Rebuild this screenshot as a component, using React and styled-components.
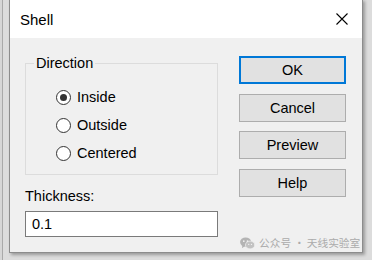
import React from "react";
import styled, { createGlobalStyle } from "styled-components";

const Global = createGlobalStyle`
  html, body { margin: 0; padding: 0; }
  body {
    width: 372px; height: 260px; overflow: hidden;
    background: #e4e4e4;
    font-family: "Liberation Sans", Arial, sans-serif;
  }
`;

const Desktop = styled.div`
  position: relative;
  width: 372px;
  height: 260px;
  display: flex;
  align-items: flex-start;
  background: linear-gradient(to right, #d6d6d6 0, #d6d6d6 2px, #a9a9a9 2px, #a9a9a9 3px, #dcdcdc 3px);
  overflow: hidden;
`;

const Window = styled.div`
  margin: -1px 0 0 9px;
  width: 354px;
  height: 254px;
  box-sizing: border-box;
  border: 1px solid #8c8c8c;
  background: #f0f0f0;
  box-shadow: 2px 2px 3px rgba(0, 0, 0, 0.3);
  display: flex;
  flex-direction: column;
`;

const TitleBar = styled.div`
  height: 38px;
  flex: none;
  background: #ffffff;
  display: flex;
  align-items: center;
  justify-content: space-between;
  padding: 0 14px 0 10px;
`;

const Title = styled.span`
  font-size: 15px;
  color: #000;
  margin-top: 1px;
`;

const CloseIcon = styled.svg`
  width: 12px;
  height: 12px;
  display: block;
`;

const Body = styled.div`
  flex: 1;
  display: flex;
  justify-content: space-between;
  padding: 18px 16px 0 15px;
`;

const LeftCol = styled.div`
  width: 193px;
  display: flex;
  flex-direction: column;
`;

const Group = styled.div`
  position: relative;
  margin-top: 7px;
  height: 112px;
  box-sizing: border-box;
  border: 1px solid #dcdcdc;
  padding: 19px 0 0 30px;
  display: flex;
  flex-direction: column;
`;

const Legend = styled.span`
  position: absolute;
  top: -9px;
  left: 8px;
  padding: 0 2px;
  background: #f0f0f0;
  font-size: 14.5px;
  line-height: 17px;
  color: #000;
`;

const RadioRow = styled.label`
  height: 28px;
  display: flex;
  align-items: center;
  gap: 6px;
  font-size: 14.5px;
  color: #000;
`;

const RadioCircle = styled.span`
  width: 15px;
  height: 15px;
  box-sizing: border-box;
  border-radius: 50%;
  border: 1px solid #333333;
  background: #ffffff;
  display: flex;
  align-items: center;
  justify-content: center;
  &::after {
    content: "";
    width: 7px;
    height: 7px;
    border-radius: 50%;
    background: ${(p) => (p.$checked ? "#333333" : "transparent")};
  }
`;

const FieldLabel = styled.div`
  margin-top: 13px;
  font-size: 14.5px;
  line-height: 17px;
  color: #000;
`;

const Input = styled.div`
  margin-top: 6px;
  height: 26px;
  box-sizing: border-box;
  border: 1px solid #7a7a7a;
  background: #ffffff;
  display: flex;
  align-items: center;
  padding-left: 6px;
  font-size: 14.5px;
  color: #000;
`;

const ButtonCol = styled.div`
  width: 107px;
  display: flex;
  flex-direction: column;
  gap: 9.5px;
`;

const Button = styled.div`
  height: 28px;
  box-sizing: border-box;
  border: ${(p) => (p.$default ? "2px solid #0078d7" : "1px solid #adadad")};
  background: #e1e1e1;
  display: flex;
  align-items: center;
  justify-content: center;
  font-size: 14.5px;
  color: #000;
`;

const Watermark = styled.div`
  position: absolute;
  left: 240px;
  top: 236px;
  display: flex;
  align-items: center;
  font-family: "Noto Sans CJK SC", sans-serif;
  font-size: 10.7px;
  line-height: 14px;
  color: #ababab;
  white-space: nowrap;
`;

const WmText = styled.span`
  margin-left: ${(p) => p.$gap}px;
`;

const radios = [
  { label: "Inside", checked: true },
  { label: "Outside", checked: false },
  { label: "Centered", checked: false },
];

const buttons = [
  { label: "OK", def: true },
  { label: "Cancel" },
  { label: "Preview" },
  { label: "Help" },
];

export default function App() {
  return (
    <>
      <Global />
      <Desktop>
        <Window>
          <TitleBar>
            <Title>Shell</Title>
            <CloseIcon viewBox="0 0 12 12">
              <path d="M0.5 0.5 L11.5 11.5 M11.5 0.5 L0.5 11.5" stroke="#000" strokeWidth="1.1" fill="none" />
            </CloseIcon>
          </TitleBar>
          <Body>
            <LeftCol>
              <Group>
                <Legend>Direction</Legend>
                {radios.map((r) => (
                  <RadioRow key={r.label}>
                    <RadioCircle $checked={r.checked} />
                    {r.label}
                  </RadioRow>
                ))}
              </Group>
              <FieldLabel>Thickness:</FieldLabel>
              <Input>0.1</Input>
            </LeftCol>
            <ButtonCol>
              {buttons.map((b) => (
                <Button key={b.label} $default={b.def}>
                  {b.label}
                </Button>
              ))}
            </ButtonCol>
          </Body>
        </Window>
        <Watermark>
          <svg width="15" height="13" viewBox="0 0 16 14">
            <ellipse cx="6" cy="5.5" rx="6" ry="5" fill="#b4b4b4" />
            <path d="M2.5 9 L2 12 L5 10 Z" fill="#b4b4b4" />
            <ellipse cx="10.8" cy="8.6" rx="5" ry="4.2" fill="#c2c2c2" stroke="#f0f0f0" strokeWidth="0.8" />
            <circle cx="4" cy="4.5" r="0.9" fill="#f0f0f0" />
            <circle cx="8" cy="4.5" r="0.9" fill="#f0f0f0" />
            <circle cx="9.3" cy="8" r="0.7" fill="#f0f0f0" />
            <circle cx="12.3" cy="8" r="0.7" fill="#f0f0f0" />
          </svg>
          <WmText $gap={4}>公众号</WmText>
          <WmText $gap={3}>·</WmText>
          <WmText $gap={2}>天线实验室</WmText>
        </Watermark>
      </Desktop>
    </>
  );
}
